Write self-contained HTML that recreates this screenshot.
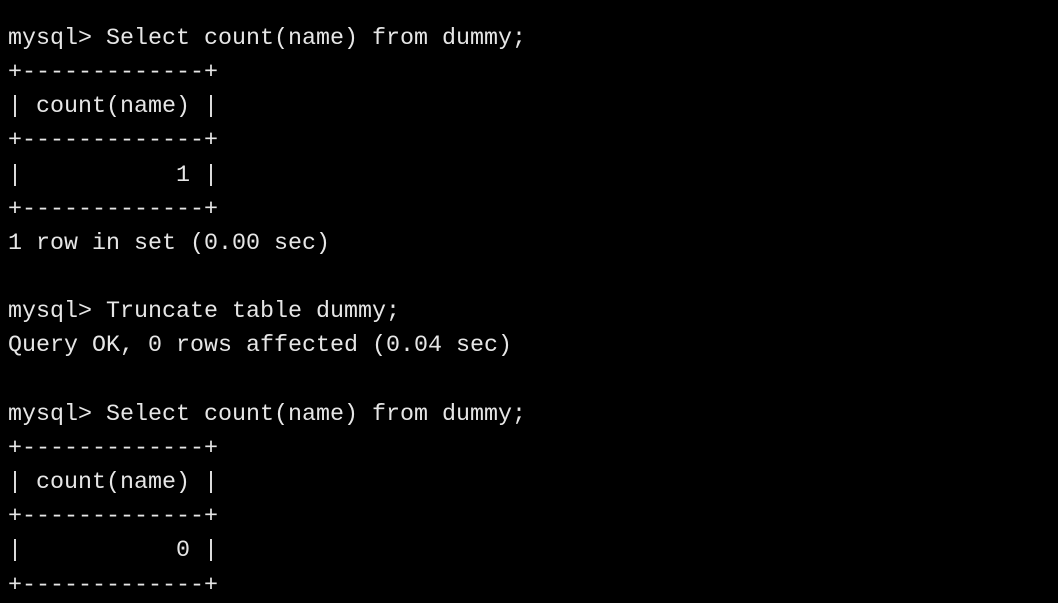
<!DOCTYPE html>
<html><head><meta charset="utf-8"><style>
html,body{margin:0;padding:0;background:#000;width:1058px;height:602px;overflow:hidden}
pre{margin:0;position:absolute;left:8px;top:22px;font-family:"Liberation Mono",monospace;font-size:23.33px;line-height:34.15px;color:#e6e6e6}
</style></head><body><pre>mysql&gt; Select count(name) from dummy;
+-------------+
| count(name) |
+-------------+
|           1 |
+-------------+
1 row in set (0.00 sec)

mysql&gt; Truncate table dummy;
Query OK, 0 rows affected (0.04 sec)

mysql&gt; Select count(name) from dummy;
+-------------+
| count(name) |
+-------------+
|           0 |
+-------------+</pre></body></html>
